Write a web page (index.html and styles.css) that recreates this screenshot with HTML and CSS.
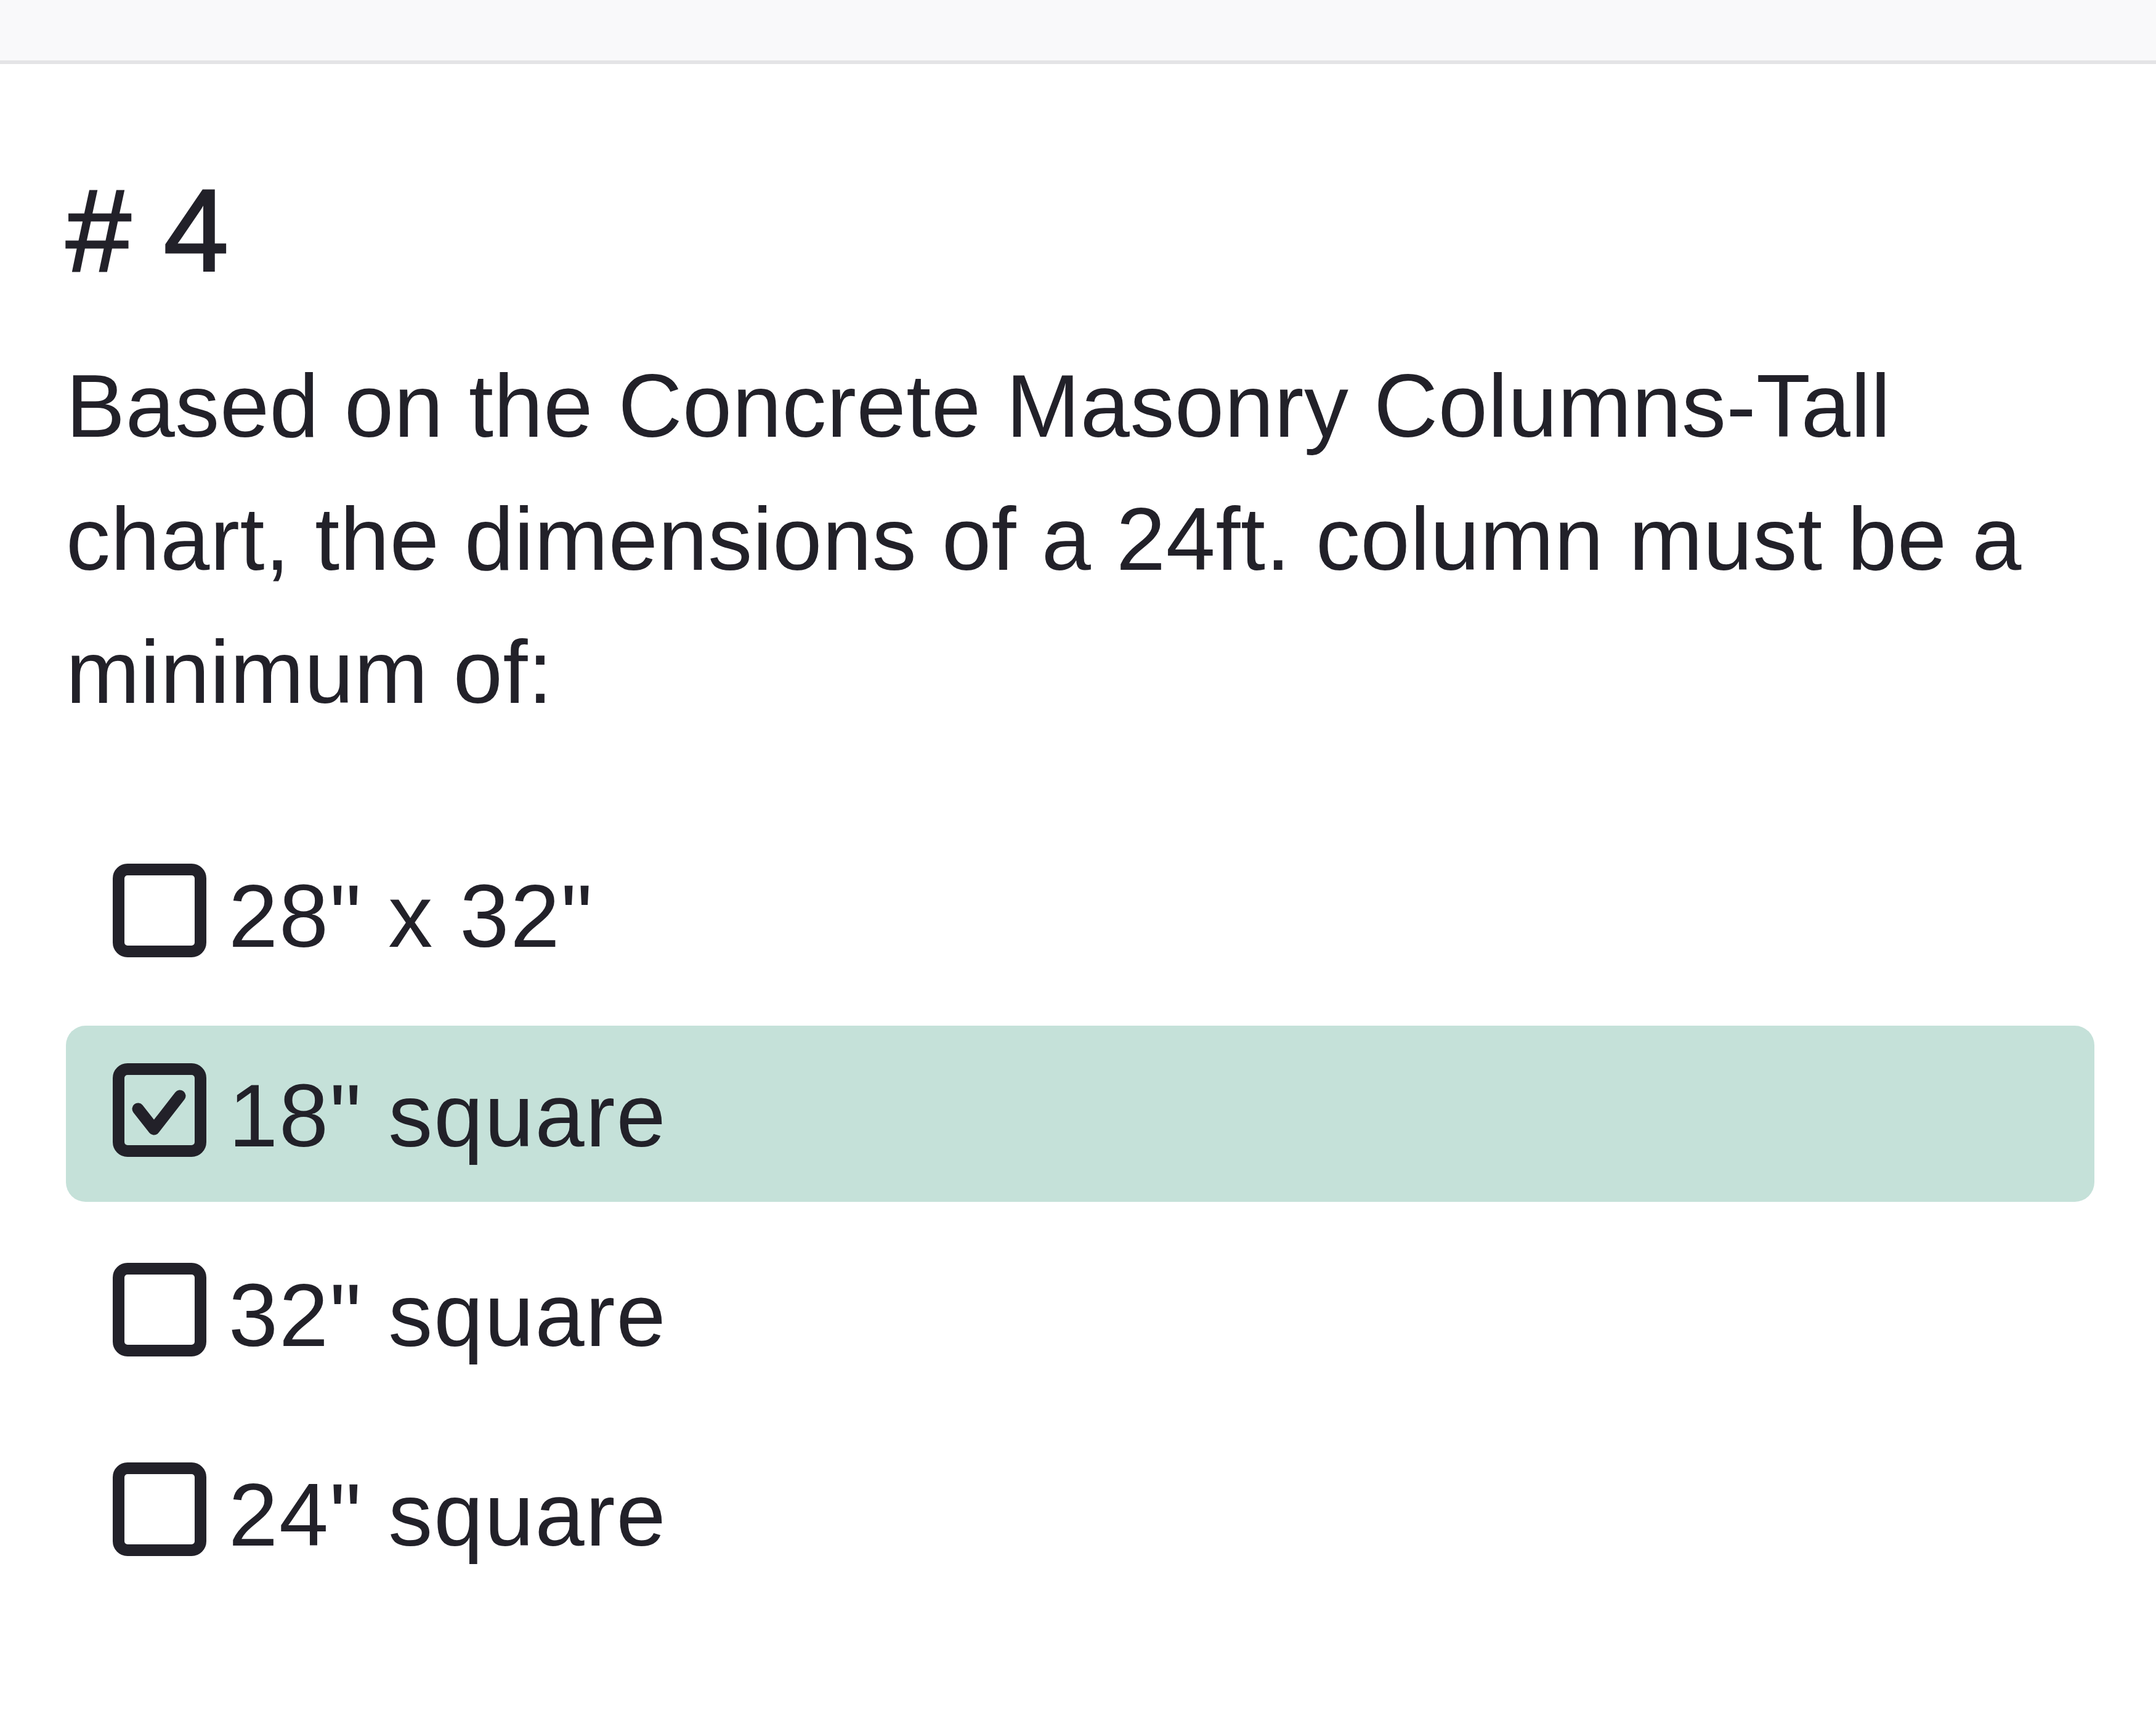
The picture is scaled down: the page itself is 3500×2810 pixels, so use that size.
FILE: index.html
```html
<!DOCTYPE html>
<html lang="en">
<head>
<meta charset="utf-8">
<title>Question 4</title>
<link rel="stylesheet" href="styles.css">
</head>
<body>
<div class="topbar"></div>
<main class="question">
  <h1 class="q-number"># 4</h1>
  <p class="q-text">Based on the Concrete Masonry Columns-Tall chart, the dimensions of a 24ft. column must be a minimum of:</p>
  <ul class="options">
    <li class="option">
      <span class="box"></span>
      <span class="label">28" x 32"</span>
    </li>
    <li class="option selected">
      <span class="box">
        <svg class="check" viewBox="0 0 114 114" width="114" height="114"><path d="M22 55 L48 88 L90 34" fill="none" stroke="#222129" stroke-width="19" stroke-linecap="round" stroke-linejoin="round"/></svg>
      </span>
      <span class="label">18" square</span>
    </li>
    <li class="option">
      <span class="box"></span>
      <span class="label">32" square</span>
    </li>
    <li class="option">
      <span class="box"></span>
      <span class="label">24" square</span>
    </li>
  </ul>
</main>
</body>
</html>
```

FILE: styles.css
```css
html, body {
  margin: 0;
  padding: 0;
  background: #ffffff;
}

body {
  font-family: "Liberation Sans", Arial, Helvetica, sans-serif;
  color: #222129;
}

.topbar {
  height: 98px;
  background: #f9f9fa;
  border-bottom: 6px solid #e4e4e6;
}

.question {
  padding: 156px 100px 0 107px;
}

.q-number {
  margin: 0;
  font-size: 190px;
  line-height: 228px;
  font-weight: 400;
  -webkit-text-stroke: 3px #222129;
}

.q-text {
  margin: 64px 0 0 0;
  font-size: 144px;
  line-height: 216px;
  letter-spacing: 0.6px;
}

.options {
  list-style: none;
  margin: 135px 0 0 0;
  padding: 0;
  display: flex;
  flex-direction: column;
  gap: 38px;
}

.option {
  height: 286px;
  display: flex;
  align-items: center;
  padding-left: 76px;
  border-radius: 32px;
  box-sizing: border-box;
}

.option.selected {
  background: #c5e1d9;
  margin-top: 6px;
  margin-bottom: -6px;
  padding-bottom: 12px;
}

.box {
  width: 152px;
  height: 152px;
  box-sizing: border-box;
  border: 19px solid #222129;
  border-radius: 24px;
  flex: none;
  display: flex;
  align-items: center;
  justify-content: center;
}

.check {
  display: block;
}

.label {
  margin-left: 36px;
  padding-top: 20px;
  font-size: 144px;
  line-height: 216px;
  letter-spacing: 2px;
  white-space: nowrap;
}
```
